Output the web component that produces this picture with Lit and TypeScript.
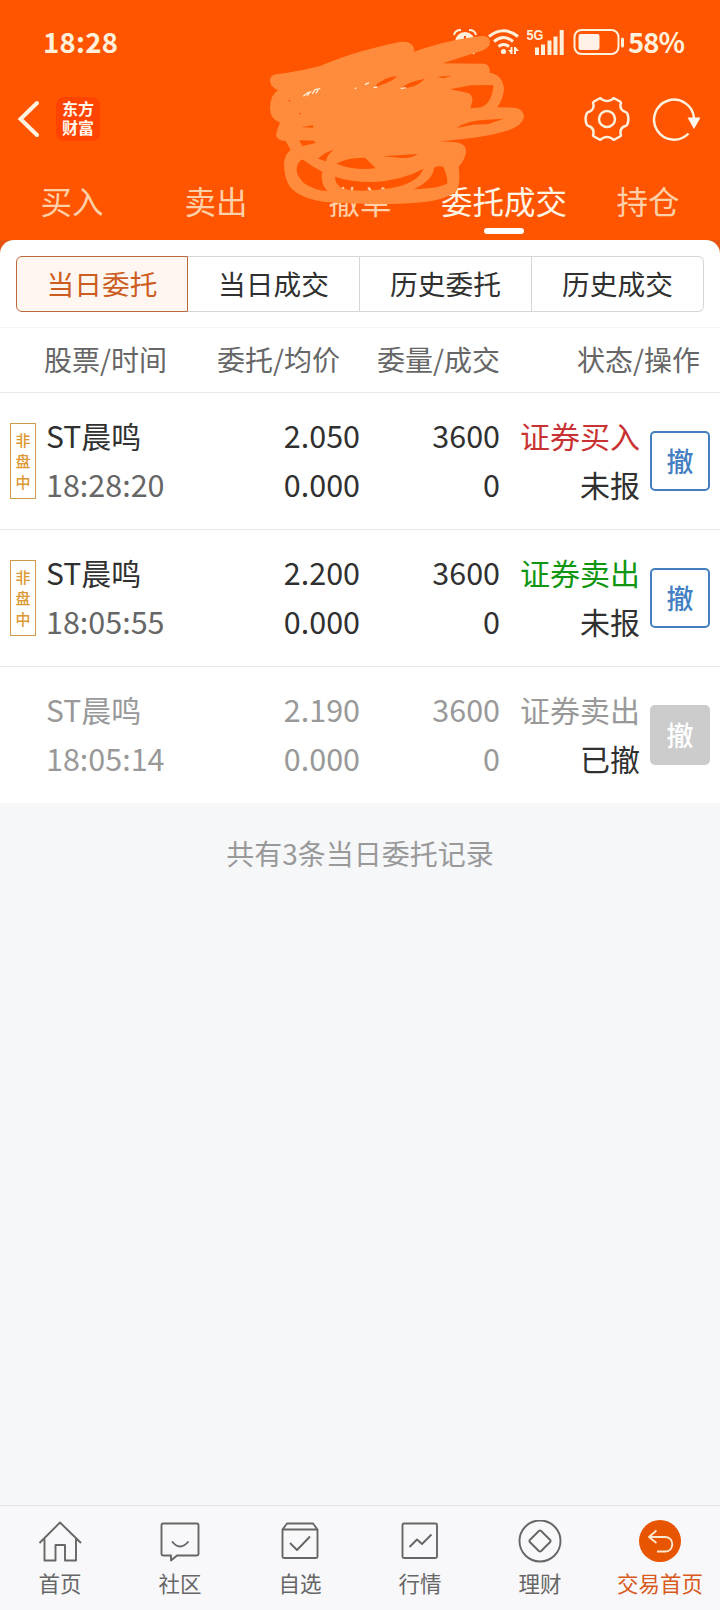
import { LitElement, html, css, svg } from "lit";
import { customElement, property } from "lit/decorators.js";
import { classMap } from "lit/directives/class-map.js";

interface Order {
  name: string;
  time: string;
  price: string;
  avg: string;
  qty: string;
  filled: string;
  side: string;
  kind: "buy" | "sell" | "off";
  state: string;
  flagged: boolean;
}

const ORDERS: Order[] = [
  { name: "ST晨鸣", time: "18:28:20", price: "2.050", avg: "0.000", qty: "3600", filled: "0", side: "证券买入", kind: "buy", state: "未报", flagged: true },
  { name: "ST晨鸣", time: "18:05:55", price: "2.200", avg: "0.000", qty: "3600", filled: "0", side: "证券卖出", kind: "sell", state: "未报", flagged: true },
  { name: "ST晨鸣", time: "18:05:14", price: "2.190", avg: "0.000", qty: "3600", filled: "0", side: "证券卖出", kind: "off", state: "已撤", flagged: false },
];

@customElement("status-bar")
class StatusBar extends LitElement {
  static styles = css`
    :host { display: flex; align-items: center; justify-content: space-between; height: 84px; box-sizing: border-box; padding: 0 37px 0 43px; color: #fff0dc; font-weight: 700; }
    .time { font-size: 27.500px; letter-spacing: 0.300px; line-height: 40px; padding-bottom: 2px; }
    .right { display: flex; align-items: center; font-size: 27.500px; line-height: 40px; gap: 2px; }
    .pct { letter-spacing: -1px; padding-bottom: 2px; width: 55px; }
    svg { display: block; }
    .net { font: 700 14px "Liberation Sans", sans-serif; }
  `;
  render() {
    return html`
      <span class="time">18:28</span>
      <span class="right">
        <svg width="174" height="30" viewBox="0 0 174 30" fill="none" stroke="#fff0dc">
          <circle cx="13" cy="15" r="10" fill="#fff0dc" stroke="none" />
          <path d="M2 8q1-5 7-5M24 8q-1-5-7-5M6 24l-2 3M20 24l2 3" stroke-width="2" />
          <path d="M13 9v6l4 2" stroke="#ff5500" stroke-width="2" />
          <g stroke-width="3">
            <path d="M37 9.500Q51.500-2 66 9.500" />
            <path d="M42 14.500Q51.500 6.500 61 14.500" />
            <path d="M46.500 19.500Q51.500 15.500 57 19.500" />
          </g>
          <circle cx="51.500" cy="24.500" r="2.600" fill="#fff0dc" stroke="none" />
          <path d="M59.500 20v7M63 20v7" stroke-width="2" />
          <path d="M59.500 27l-3.500-4h3.500zM63.500 20l3.500 4h-3.500z" fill="#fff0dc" stroke="none" />
          <text class="net" x="74.500" y="13" fill="#fff0dc" stroke="none" textLength="17" lengthAdjust="spacingAndGlyphs">5G</text>
          <path d="M85 20.500V28M91 17.500V28M97.500 13.500V28M103.500 9.500V28M109.700 3V28" stroke-width="4" />
          <rect x="122.500" y="3" width="44" height="24" rx="7" stroke-width="2" />
          <rect x="126.500" y="7" width="21" height="16" rx="2" fill="#fff0e8" stroke="none" />
          <path d="M170.500 12v7" stroke-width="3" stroke-linecap="round" />
        </svg>
        <span class="pct">58%</span>
      </span>
    `;
  }
}

@customElement("order-row")
class OrderRow extends LitElement {
  @property({ attribute: false }) order!: Order;
  static styles = css`
    :host { display: block; border-bottom: 1px solid #e8e8ea; }
    :host(:last-of-type) { border-bottom: 0; }
    .row { display: grid; grid-template-columns: 36px 144px 170px 140px 140px 70px; height: 136px; padding: 0 10px; align-items: center; color: #303030; }
    .cell { display: flex; flex-direction: column; font-size: 30px; line-height: 49px; padding-bottom: 3px; white-space: nowrap; }
    .end { text-align: right; }
    .num { font-size: 30.500px; }
    .time { color: #666; }
    .badge { box-sizing: border-box; width: 26px; height: 76px; border: 1px solid #cf9b48; color: #dc9833; font-size: 15px; font-weight: 500; line-height: 21px; display: flex; flex-direction: column; align-items: center; justify-content: center; padding-bottom: 2px; }
    .buy { color: #c93232; }
    .sell { color: #119611; }
    .off { color: #999; }
    .cancelled { color: #999; }
    .cancelled .time { color: #999; }
    .cancelled .state { color: #303030; }
    .btn { justify-self: end; box-sizing: border-box; width: 60px; height: 60px; border: 2px solid #437fbe; border-radius: 5px; background: #fff; color: #437fc2; font: 500 27px/54px "Noto Sans CJK SC", sans-serif; padding: 0; text-align: center; }
    .btn.gray { background: #ccc; border-color: #ccc; color: #fff; }
  `;
  render() {
    const o = this.order;
    const off = o.kind === "off";
    return html`
      <div class=${classMap({ row: true, cancelled: off })}>
        <div>${o.flagged ? html`<div class="badge"><span>非</span><span>盘</span><span>中</span></div>` : ""}</div>
        <div class="cell"><span>${o.name}</span><span class="num time">${o.time}</span></div>
        <div class="cell end"><span class="num">${o.price}</span><span class="num">${o.avg}</span></div>
        <div class="cell end"><span class="num">${o.qty}</span><span class="num">${o.filled}</span></div>
        <div class="cell end"><span class=${o.kind}>${o.side}</span><span class="state">${o.state}</span></div>
        <button class=${classMap({ btn: true, gray: off })}>撤</button>
      </div>
    `;
  }
}

const NAV = [
  { label: "首页", icon: svg`<path d="M1.500 23L22 2.500 43 23M6.500 19v21.500h11V25h9.500v15.500h11V19" />` },
  { label: "社区", icon: svg`<path d="M5 3.500h34q1.500 0 1.500 1.500v29q0 1.500-1.500 1.500H19l-6 5v-5H5q-1.500 0-1.500-1.500V5q0-1.500 1.500-1.500zM14 21.500q8 10 16.500 0" />` },
  { label: "自选", icon: svg`<path d="M4.500 9.500L9 3.500h26l4.500 6v27q0 1.500-1.500 1.500H6q-1.500 0-1.500-1.500zM4.500 9.500h35M12 23l7 7 13-13.500" />` },
  { label: "行情", icon: svg`<rect x="4.500" y="3.500" width="34.500" height="34.500" rx="1.500" /><path d="M11.500 27l7.500-7.500 5 4.500 9.500-9.500" />` },
  { label: "理财", icon: svg`<circle cx="22" cy="21" r="20.500" /><path d="M20.800 11q1.200-1 2.400 0l9 9q1 1 0 2l-9 9q-1.200 1-2.400 0l-9-9q-1-1 0-2z" />` },
  { label: "交易首页", icon: svg`<circle cx="22" cy="21" r="21" fill="#e85500" stroke="none" /><path d="M18.500 10.500l-7.500 6.500 7.500 6M11 17H27.500c9 0 9 14.500 0 14.500h-8.500" stroke="#ffe9d0" />` },
];

@customElement("bottom-nav")
class BottomNav extends LitElement {
  static styles = css`
    :host { display: grid; grid-template-columns: repeat(6, 1fr); height: 105px; box-sizing: border-box; border-top: 1px solid #e2e3e5; background: #f8f8fa; }
    .item { display: flex; flex-direction: column; align-items: center; padding-top: 14px; color: #666; font-size: 21.500px; line-height: 30px; gap: 5px; }
    .item:last-child { color: #d8591c; }
    svg { display: block; fill: none; stroke: #666; stroke-width: 1.900; stroke-linejoin: round; }
  `;
  render() {
    return NAV.map((n) => html`<div class="item"><svg width="44" height="43" viewBox="0 0 44 43">${n.icon}</svg><span>${n.label}</span></div>`);
  }
}

@customElement("app-root")
class AppRoot extends LitElement {
  static styles = css`
    :host { display: flex; flex-direction: column; position: relative; width: 720px; height: 1610px; overflow: hidden; background: #f6f7f9; font-family: "Noto Sans CJK SC", sans-serif; }
    .head { background: #ff5500; height: 240px; }
    .bar { display: flex; align-items: center; height: 70px; padding: 0 20px 0 16px; }
    .back { display: block; margin-right: 16px; }
    .logo { width: 44px; height: 44px; border-radius: 8px; background: #ff4300; color: #fff6ec; font-weight: 700; font-size: 16px; line-height: 19px; padding: 2px 6px 4px; box-sizing: border-box; margin-right: auto; word-break: break-all; }
    .gear { display: block; margin-right: 22px; }
    .tabs { display: grid; grid-template-columns: repeat(5, 1fr); margin-top: 23px; }
    .tab { display: flex; flex-direction: column; align-items: center; font-size: 31.500px; line-height: 46px; color: #ffd0a8; white-space: nowrap; }
    .tab.on { color: #fff5e6; }
    .tab.on::after { content: ""; width: 40px; height: 6px; border-radius: 3px; background: #fff; margin-top: 5px; }
    .scribble { position: absolute; left: 240px; top: 20px; pointer-events: none; }
    .corner { background: linear-gradient(#e25410 0 20px, #fff 20px); }
    .sheet { background: #fff; border-radius: 14px 14px 0 0; padding-top: 16px; }
    .seg { display: grid; grid-template-columns: repeat(4, 1fr); height: 56px; margin: 0 16px; }
    .opt { box-sizing: border-box; border: 1px solid #d3d6d6; border-left-width: 0; text-align: center; font-size: 27.700px; line-height: 52px; color: #303030; }
    .opt:first-child { border: 1px solid #b9683c; border-radius: 6px 0 0 6px; background: #fff5f1; color: #cc5d20; }
    .opt:last-child { border-radius: 0 6px 6px 0; }
    .cols { display: grid; grid-template-columns: 124px 172px 160px 1fr; white-space: nowrap; margin-top: 15px; height: 66px; box-sizing: border-box; border-top: 1px solid #f4f4f5; border-bottom: 1px solid #e9e9eb; color: #666; font-size: 28px; line-height: 63px; padding: 0 20px 0 44px; }
    .c { text-align: right; }
    .total { text-align: center; color: #999; font-size: 28px; line-height: 40px; margin-top: 30px; }
    bottom-nav { margin-top: auto; }
  `;
  render() {
    return html`
      <div class="head">
        <status-bar></status-bar>
        <div class="bar">
          <svg class="back" width="24" height="40" viewBox="0 0 24 40" fill="none" stroke="#fff3e2" stroke-width="4" stroke-linecap="round" stroke-linejoin="miter"><path d="M21 4L4.500 20 21 36" /></svg>
          <div class="logo">东方财富</div>
          <svg class="gear" width="46" height="46" viewBox="0 0 46 46" fill="none" stroke="#fff0dc" stroke-width="2.500" stroke-linejoin="round">
            <circle cx="23" cy="23" r="8" />
            <path d="M15.500 2.500Q17 2 18 3.500Q23 6.500 28 3.500Q29 2 30.500 2.500L36 5.500Q37.500 6.500 36.500 8.500Q36 14.500 41.500 16Q43 16.200 43.500 18Q45.300 23 43.500 28Q43 29.800 41.500 30Q36 31.500 36.500 37.500Q37.500 39.500 36 40.500L30.500 43.500Q29 44 28 42.500Q23 39.500 18 42.500Q17 44 15.500 43.500L10 40.500Q8.500 39.500 9.500 37.500Q10 31.500 4.500 30Q3 29.800 2.500 28Q.700 23 2.500 18Q3 16.200 4.500 16Q10 14.500 9.500 8.500Q8.500 6.500 10 5.500Z" />
          </svg>
          <svg width="48" height="46" viewBox="0 0 48 46" fill="none" stroke="#fff0dc" stroke-width="2.500">
            <path d="M36.500 37.500A20 20 0 1 1 42 22" />
            <path d="M35.500 21.500h13L42 33z" fill="#fff8ee" stroke="none" />
          </svg>
        </div>
        <div class="tabs">
          ${["买入", "卖出", "撤单", "委托成交", "持仓"].map((t, i) => html`<div class=${classMap({ tab: true, on: i === 3 })}>${t}</div>`)}
        </div>
      </div>
      <svg class="scribble" width="300" height="230" viewBox="0 0 900 690">
        <path fill="#ff8c3c" fill-rule="evenodd" d="M90 182Q90 164 112 162C150 158 200 148 240 138C320 104 400 82 480 66Q522 62 523 95C590 72 660 54 728 48Q750 48 750 68Q748 84 725 92L608 130L735 131Q750 135 749 158Q790 165 792 210Q788 240 772 262L825 263Q852 268 852 292Q845 322 790 335C740 350 680 356 598 364L650 367Q680 372 678 398Q674 420 656 440Q662 490 650 512Q635 532 560 545C470 556 320 552 250 545Q180 535 150 500Q132 475 132 430Q134 402 152 390L137 363Q110 362 108 345Q112 325 120 308Q90 298 90 265Q90 225 115 210Q92 202 90 182Z
          M760 195L692 196L630 208L675 217Q700 222 697 242L691 265L725 262Q758 245 760 195Z
          M650 324Q680 301 740 299L792 296L745 312L700 314Z
          M403 202Q425 172 472 168Q455 185 432 192Z
          M480 207Q505 184 555 176Q535 196 512 201Z
          M590 170L637 167L610 175Z
          M170 445Q175 418 190 419Q215 440 247 455Q240 490 262 513Q225 512 190 488Q168 465 170 445Z
          M289 431Q320 412 375 413L407 445Q340 452 289 431Z
          M285 470Q330 486 400 486Q490 480 550 446Q535 490 450 505Q370 518 310 507Q285 495 285 470Z
          M582 443Q598 437 610 440Q623 470 622 490Q600 506 520 508Q580 480 582 443Z
          M428 409L533 402Q515 416 485 414Z
          M234 416Q255 395 282 391Q262 402 258 424Z
          M178 361L222 362L227 369L187 378Z
          M185 322L219 315L220 323Z
          M144 241l8 0l-2 6zM176 278l7 2l-4 4z" />
        <path d="M190 229l12-10 12-4M202 228l8-13M217 222l8-13 16-3M228 220l6-10M345 207l3-4M375 194l12-6M401 203l10-2M482 206l15-3" fill="none" stroke="#fff1de" stroke-width="4" />
      </svg>
      <div class="corner"><div class="sheet">
        <div class="seg">${["当日委托", "当日成交", "历史委托", "历史成交"].map((t) => html`<div class="opt">${t}</div>`)}</div>
        <div class="cols"><span>股票/时间</span><span class="c">委托/均价</span><span class="c">委量/成交</span><span class="c">状态/操作</span></div>
        ${ORDERS.map((o) => html`<order-row .order=${o}></order-row>`)}
      </div></div>
      <div class="total">共有3条当日委托记录</div>
      <bottom-nav></bottom-nav>
    `;
  }
}
